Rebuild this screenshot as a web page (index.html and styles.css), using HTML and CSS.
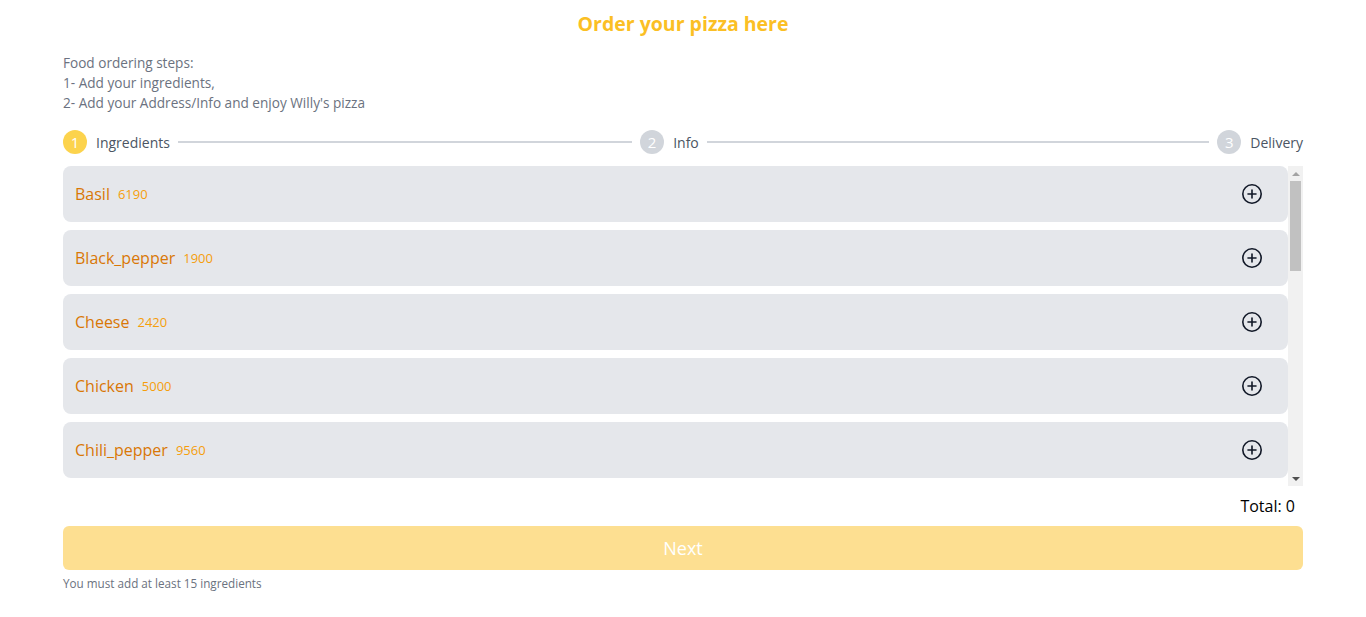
FILE: index.html
```html
<!DOCTYPE html>
<html lang="en">
<head>
<meta charset="utf-8">
<title>Order your pizza</title>
<link rel="stylesheet" href="styles.css">
</head>
<body>
<main class="page">
  <h1 class="title">Order your pizza here</h1>
  <p class="intro">Food ordering steps:<br>1- Add your ingredients,<br>2- Add your Address/Info and enjoy Willy's pizza</p>

  <ol class="stepper">
    <li class="step grow active"><span class="dot">1</span><span class="label">Ingredients</span><span class="line"></span></li>
    <li class="step grow"><span class="dot">2</span><span class="label">Info</span><span class="line"></span></li>
    <li class="step"><span class="dot">3</span><span class="label">Delivery</span></li>
  </ol>

  <div class="scroller">
    <ul class="list">
      <li class="item"><span class="name">Basil</span><span class="price">6190</span><button class="add" aria-label="add"><svg viewBox="0 0 24 24" width="24" height="24"><circle cx="12" cy="12" r="9.2"/><path d="M12 8v8M8 12h8"/></svg></button></li>
      <li class="item"><span class="name">Black_pepper</span><span class="price">1900</span><button class="add" aria-label="add"><svg viewBox="0 0 24 24" width="24" height="24"><circle cx="12" cy="12" r="9.2"/><path d="M12 8v8M8 12h8"/></svg></button></li>
      <li class="item"><span class="name">Cheese</span><span class="price">2420</span><button class="add" aria-label="add"><svg viewBox="0 0 24 24" width="24" height="24"><circle cx="12" cy="12" r="9.2"/><path d="M12 8v8M8 12h8"/></svg></button></li>
      <li class="item"><span class="name">Chicken</span><span class="price">5000</span><button class="add" aria-label="add"><svg viewBox="0 0 24 24" width="24" height="24"><circle cx="12" cy="12" r="9.2"/><path d="M12 8v8M8 12h8"/></svg></button></li>
      <li class="item"><span class="name">Chili_pepper</span><span class="price">9560</span><button class="add" aria-label="add"><svg viewBox="0 0 24 24" width="24" height="24"><circle cx="12" cy="12" r="9.2"/><path d="M12 8v8M8 12h8"/></svg></button></li>
    </ul>
    <div class="scrollbar" aria-hidden="true">
      <div class="sb-btn"><span class="arrow-up"></span></div>
      <div class="sb-track"><div class="sb-thumb"></div></div>
      <div class="sb-btn"><span class="arrow-down"></span></div>
    </div>
  </div>

  <div class="total">Total: 0</div>
  <button class="next" disabled>Next</button>
  <p class="hint">You must add at least 15 ingredients</p>
</main>
</body>
</html>
```

FILE: styles.css
```css
* { box-sizing: border-box; }
html, body { margin: 0; padding: 0; background: #fff; }
body { font-family: "Open Sans", "Noto Sans", sans-serif; color: #111827; }

.page { width: 1240px; margin: 0 auto; }

.title {
  margin: 0;
  padding-top: 10px;
  font-size: 19.5px;
  line-height: 28px;
  font-weight: 700;
  color: #fbbf24;
  text-align: center;
}

.intro {
  margin: 15px 0 0;
  font-size: 13.6px;
  line-height: 20px;
  color: #6b7280;
}

.stepper {
  list-style: none;
  margin: 17px 0 0;
  padding: 0;
  display: flex;
  align-items: center;
  height: 24px;
}
.step { display: flex; align-items: center; }
.step.grow { flex: 1; }
.dot {
  width: 24px; height: 24px;
  border-radius: 50%;
  background: #d1d5db;
  color: #fff;
  font-size: 15px;
  line-height: 24px;
  text-align: center;
  flex: none;
}
.step.active .dot { background: #fcd34d; }
.label {
  margin-left: 9px;
  font-size: 14px;
  color: #4b5563;
}
.line {
  flex: 1;
  height: 2px;
  background: #d1d5db;
  margin: 0 8px;
}

.scroller {
  display: flex;
  margin-top: 12px;
  height: 320px;
}
.list {
  flex: 1;
  list-style: none;
  margin: 0;
  padding: 0;
  overflow: hidden;
}
.scrollbar {
  width: 15px;
  flex: none;
  display: flex;
  flex-direction: column;
  background: #f1f1f1;
}
.sb-btn {
  height: 15px;
  display: flex;
  align-items: center;
  justify-content: center;
}
.arrow-up {
  width: 0; height: 0;
  border-left: 4px solid transparent;
  border-right: 4px solid transparent;
  border-bottom: 4px solid #a3a3a3;
}
.arrow-down {
  width: 0; height: 0;
  border-left: 4px solid transparent;
  border-right: 4px solid transparent;
  border-top: 4px solid #505050;
}
.sb-track { flex: 1; padding: 0 2px; }
.sb-thumb { height: 90px; background: #c1c1c1; }

.item {
  display: flex;
  align-items: center;
  height: 56px;
  margin-bottom: 8px;
  padding: 0 24px 0 12px;
  background: #e5e7eb;
  border-radius: 8px;
}
.name { font-size: 16px; color: #d97706; }
.price { margin-left: 8px; font-size: 13px; color: #f59e0b; }
.add {
  margin-left: auto;
  padding: 0; border: 0; background: none;
  width: 24px; height: 24px;
  display: flex;
}
.add svg { fill: none; stroke: #111827; stroke-width: 1.6; stroke-linecap: round; }

.total {
  margin-top: 8px;
  padding-right: 8px;
  text-align: right;
  font-size: 16px;
  line-height: 24px;
  color: #000;
}

.next {
  display: block;
  width: 100%;
  height: 44px;
  margin-top: 8px;
  border: 0;
  border-radius: 6px;
  background: rgba(251, 191, 36, 0.5);
  color: #fff;
  font-family: inherit;
  font-size: 18px;
}

.hint {
  margin: 5px 0 0;
  font-size: 11.7px;
  line-height: 16px;
  color: #6b7280;
}
```
